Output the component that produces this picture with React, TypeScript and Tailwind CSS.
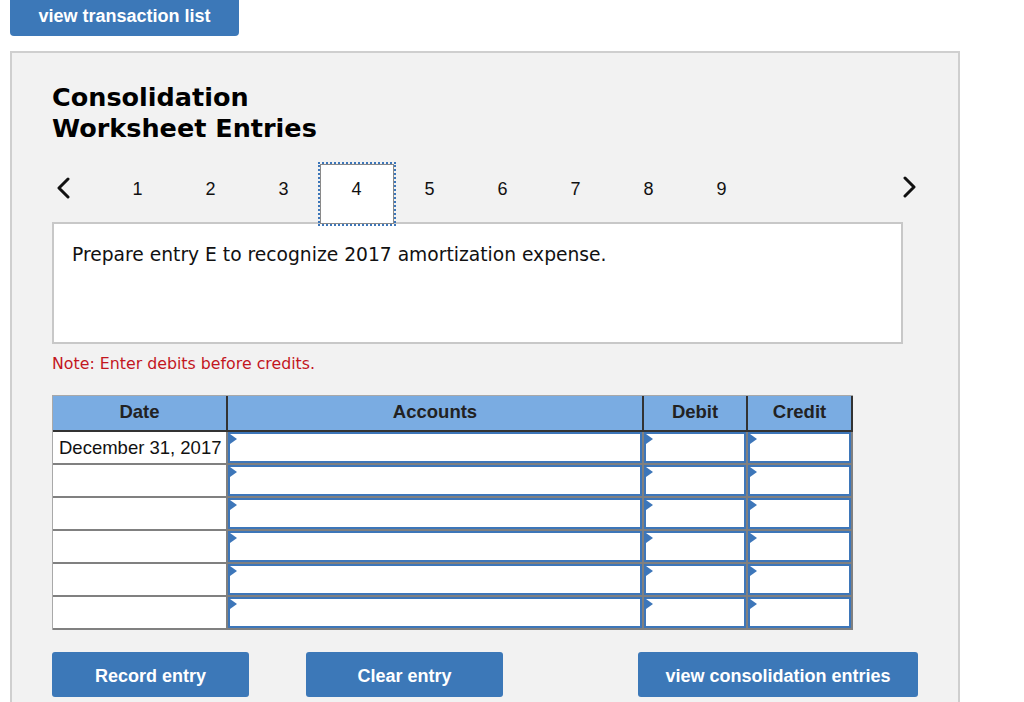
import { ReactNode } from "react";

const steps = [1, 2, 3, 4, 5, 6, 7, 8, 9];
const activeStep = 4;
const rows = ["December 31, 2017", "", "", "", "", ""];

const arial = "font-['Liberation_Sans',Arial,sans-serif]";
const verdana = "font-['DejaVu_Sans',Verdana,sans-serif]";

function Chevron({ dir }: { dir: "left" | "right" }) {
  return (
    <svg width="16" height="22" viewBox="0 0 16 22" fill="none">
      <polyline
        points={dir === "left" ? "12,2 3,11 12,20" : "4,2 13,11 4,20"}
        stroke="#111"
        strokeWidth="3"
        strokeLinecap="round"
        strokeLinejoin="round"
      />
    </svg>
  );
}

function InputCell() {
  return (
    <div className="h-full border-r-2 border-b-2 border-[#808080]">
      <div className="relative h-full border-2 border-[#3d76b9] bg-white">
        <span className="absolute left-0 top-0 h-0 w-0 border-l-[7px] border-y-[5px] border-l-[#3d76b9] border-y-transparent" />
      </div>
    </div>
  );
}

function BlueButton({ children, width }: { children: ReactNode; width: string }) {
  return (
    <button
      className={`${width} h-[45px] rounded-[3px] bg-[#3c78b8] pt-[3px] text-[18px] font-bold text-white ${arial}`}
    >
      {children}
    </button>
  );
}

export default function App() {
  return (
    <div className="min-h-screen bg-white pl-[10px]">
      <button
        className={`-mt-[6px] block h-[42px] w-[229px] rounded-b-[4px] bg-[#3c78b8] pt-[2px] text-[18px] font-bold text-white ${arial}`}
      >
        view transaction list
      </button>

      <div className="mt-[15px] w-[950px] border-2 border-[#cfcfcf] bg-[#f2f2f2] pb-[20px] pl-[40px] pt-[29px]">
        {/* Title */}
        <h1 className={`text-[25.5px] font-bold leading-[31px] text-black ${verdana}`}>
          Consolidation
          <br />
          Worksheet Entries
        </h1>

        {/* Step nav */}
        <div className={`mt-[18px] flex h-[60px] w-[865px] items-center ${arial}`}>
          <div className="-mt-[8px] flex w-[49px] items-center pl-[4px]">
            <Chevron dir="left" />
          </div>
          {steps.map((s) => (
            <div
              key={s}
              className="flex h-full w-[73px] items-center justify-center pb-[6px] text-[18px] text-[#111]"
            >
              {s === activeStep ? (
                <div className="relative z-10 flex h-[64px] w-[78px] shrink-0 translate-y-[5px] items-center justify-center border-2 border-dotted border-[#3d76b9]">
                  <div className="flex h-full w-full items-center justify-center border border-[#8a8a8a] bg-white pb-[10px]">
                    {s}
                  </div>
                </div>
              ) : (
                s
              )}
            </div>
          ))}
          <div className="-mt-[10px] ml-auto flex items-center">
            <Chevron dir="right" />
          </div>
        </div>

        {/* Question */}
        <div className="h-[122px] w-[851px] border-2 border-[#c8c8c8] bg-white pl-[18px] pt-[20px]">
          <p className={`text-[18.7px] leading-[22px] text-[#111] ${verdana}`}>
            Prepare entry E to recognize 2017 amortization expense.
          </p>
        </div>

        <p className={`mt-[10px] text-[15.8px] leading-[20px] text-[#c3161e] ${verdana}`}>
          Note: Enter debits before credits.
        </p>

        {/* Journal table */}
        <div className={`mt-[21px] w-[801px] border-l border-t border-[#a9a9a9] ${arial}`}>
          <div className="grid h-[36px] grid-cols-[175px_416px_104px_105px] bg-[#7aace2] text-[18.5px] font-bold text-[#222]">
            {["Date", "Accounts", "Debit", "Credit"].map((h) => (
              <div
                key={h}
                className="flex items-center justify-center border-b-2 border-r-2 border-[#333] pb-[3px]"
              >
                {h}
              </div>
            ))}
          </div>
          {rows.map((date, i) => (
            <div key={i} className="grid h-[33px] grid-cols-[175px_416px_104px_105px]">
              <div className="flex items-center border-b-2 border-r-2 border-[#808080] bg-white pl-[6px] text-[18.5px] text-[#111]">
                {date}
              </div>
              <InputCell />
              <InputCell />
              <InputCell />
            </div>
          ))}
        </div>

        {/* Actions */}
        <div className="mt-[22px] flex items-center">
          <BlueButton width="w-[197px]">Record entry</BlueButton>
          <div className="ml-[57px]">
            <BlueButton width="w-[197px]">Clear entry</BlueButton>
          </div>
          <div className="ml-[135px]">
            <BlueButton width="w-[280px]">view consolidation entries</BlueButton>
          </div>
        </div>
      </div>
    </div>
  );
}
